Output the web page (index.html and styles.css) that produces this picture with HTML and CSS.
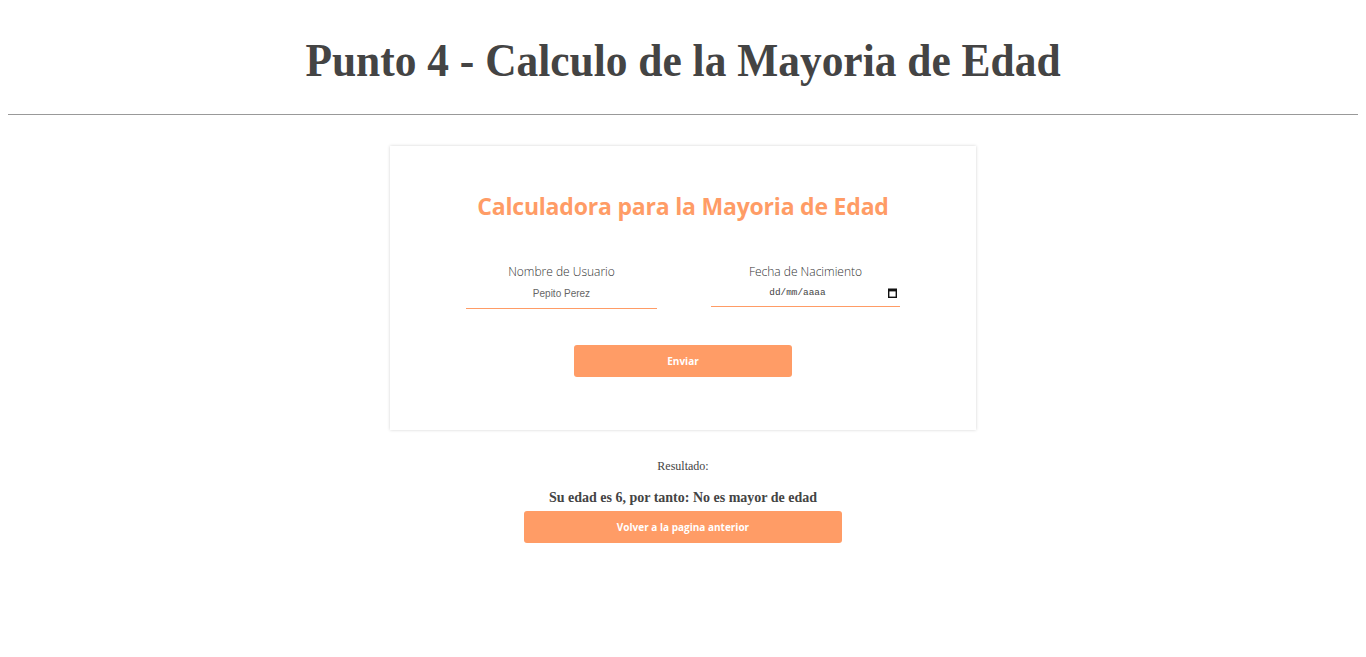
FILE: index.html
```html
<!DOCTYPE html>
<html lang="es">
<head>
<meta charset="utf-8">
<title>Punto 4</title>
<link rel="stylesheet" href="styles.css">
</head>
<body>
<header class="page-header">
  <h1 class="page-title">Punto 4 - Calculo de la Mayoria de Edad</h1>
</header>
<hr class="divider">
<main class="main">
  <section class="card">
    <h2 class="card-title">Calculadora para la Mayoria de Edad</h2>
    <form class="form">
      <div class="fields">
        <div class="field">
          <label class="field-label">Nombre de Usuario</label>
          <div class="field-input text-input">Pepito Perez</div>
        </div>
        <div class="field">
          <label class="field-label">Fecha de Nacimiento</label>
          <div class="field-input date-input">
            <span class="date-text">dd/mm/aaaa</span>
            <svg class="cal-icon" width="9" height="10" viewBox="0 0 9 10"><rect x="0.7" y="1.2" width="7.6" height="8.1" fill="none" stroke="#111" stroke-width="1.4"/><rect x="0.7" y="1" width="7.6" height="2.4" fill="#111"/></svg>
          </div>
        </div>
      </div>
      <div class="btn-row">
        <button type="button" class="btn btn-send">Enviar</button>
      </div>
    </form>
  </section>
  <section class="result">
    <p class="result-label">Resultado:</p>
    <p class="result-text">Su edad es 6, por tanto: No es mayor de edad</p>
    <button type="button" class="btn btn-back">Volver a la pagina anterior</button>
  </section>
</main>
</body>
</html>
```
FILE: styles.css
```css
body {
  margin: 8px;
  font-family: "Liberation Serif", serif;
  color: #444;
  background: #fff;
}
.page-header {
  display: flex;
  justify-content: center;
  padding-top: 30px;
}
.page-title {
  margin: 0;
  font-family: "Liberation Serif", serif;
  font-weight: bold;
  font-size: 46px;
  line-height: 1;
  color: #444;
  transform: scaleX(0.944);
  white-space: nowrap;
}
.divider {
  margin: 30px -1px 0;
  border: none;
  border-top: 1px solid #999;
  height: 0;
  box-sizing: border-box;
}
.main {
  display: flex;
  flex-direction: column;
  align-items: center;
  padding-top: 31px;
}
.card {
  width: 586px;
  box-sizing: border-box;
  box-shadow: 0 0 3px rgba(0,0,0,0.18);
  padding: 44px 76px 53px;
  display: flex;
  flex-direction: column;
  align-items: center;
}
.card-title {
  margin: 0;
  font-family: "Open Sans", sans-serif;
  font-weight: bold;
  font-size: 23px;
  color: #ff9c66;
  letter-spacing: -0.2px;
}
.form {
  width: 100%;
  margin-top: 42px;
}
.fields {
  display: flex;
  justify-content: space-between;
  align-items: flex-start;
}
.field {
  display: flex;
  flex-direction: column;
  align-items: center;
}
.field-label {
  font-family: "Open Sans", sans-serif;
  font-weight: 300;
  font-size: 12px;
  color: #333;
  line-height: 16px;
}
.field-input {
  box-sizing: border-box;
  border-bottom: 1px solid #ff9c66;
  margin-top: 3px;
}
.text-input {
  width: 191px;
  height: 26px;
  padding-top: 4px;
  font-family: "Liberation Sans", sans-serif;
  font-size: 10px;
  color: #666;
  text-align: center;
  line-height: 14px;
}
.date-input {
  width: 189px;
  height: 24px;
  padding: 3px 3px 0 0;
  display: flex;
  align-items: flex-start;
  line-height: 14px;
}
.date-text {
  flex: 1;
  text-align: center;
  font-family: "Liberation Mono", monospace;
  font-size: 9.4px;
  color: #444;
}
.cal-icon {
  margin: 2px 0 0 4px;
  flex: none;
}
.btn-row {
  display: flex;
  justify-content: center;
  margin-top: 36px;
}
.btn {
  border: none;
  background: #ff9c66;
  color: #fff;
  font-family: "Open Sans", sans-serif;
  font-weight: bold;
  font-size: 10px;
  border-radius: 3px;
  height: 32px;
  cursor: pointer;
}
.btn-send {
  width: 218px;
}
.result {
  display: flex;
  flex-direction: column;
  align-items: center;
  margin-top: 29px;
}
.result-label {
  margin: 0;
  font-size: 12px;
  color: #444;
}
.result-text {
  margin: 16px 0 0;
  font-size: 14px;
  font-weight: bold;
  color: #444;
}
.btn-back {
  width: 318px;
  margin-top: 5px;
}
```
